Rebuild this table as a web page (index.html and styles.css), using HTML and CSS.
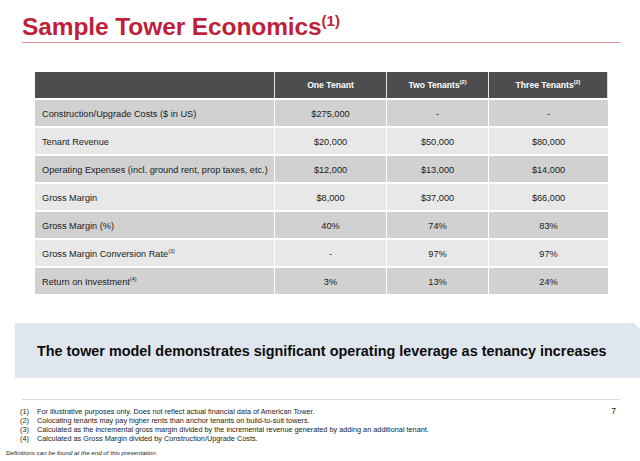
FILE: index.html
```html
<!DOCTYPE html>
<html>
<head>
<meta charset="utf-8">
<link rel="stylesheet" href="styles.css">
</head>
<body>
<div class="slide">
  <header class="head">
    <h1 class="title">Sample Tower Economics<sup>(1)</sup></h1>
  </header>

  <table class="econ">
    <colgroup>
      <col class="c1"><col class="c2"><col class="c3"><col class="c4">
    </colgroup>
    <thead>
      <tr>
        <th></th>
        <th>One Tenant</th>
        <th>Two Tenants<sup>(2)</sup></th>
        <th>Three Tenants<sup>(2)</sup></th>
      </tr>
    </thead>
    <tbody>
      <tr class="dark"><td>Construction/Upgrade Costs ($ in US)</td><td>$275,000</td><td>-</td><td>-</td></tr>
      <tr class="light"><td>Tenant Revenue</td><td>$20,000</td><td>$50,000</td><td>$80,000</td></tr>
      <tr class="dark"><td>Operating Expenses (incl. ground rent, prop taxes, etc.)</td><td>$12,000</td><td>$13,000</td><td>$14,000</td></tr>
      <tr class="light"><td>Gross Margin</td><td>$8,000</td><td>$37,000</td><td>$66,000</td></tr>
      <tr class="dark"><td>Gross Margin (%)</td><td>40%</td><td>74%</td><td>83%</td></tr>
      <tr class="light"><td>Gross Margin Conversion Rate<sup>(3)</sup></td><td>-</td><td>97%</td><td>97%</td></tr>
      <tr class="dark"><td>Return on Investment<sup>(4)</sup></td><td>3%</td><td>13%</td><td>24%</td></tr>
    </tbody>
  </table>

  <div class="banner">The tower model demonstrates significant operating leverage as tenancy increases</div>

  <footer class="foot">
    <div class="notes-row">
      <ol class="notes">
        <li><span class="num">(1)</span>For illustrative purposes only. Does not reflect actual financial data of American Tower.</li>
        <li><span class="num">(2)</span>Colocating tenants may pay higher rents than anchor tenants on build-to-suit towers.</li>
        <li><span class="num">(3)</span>Calculated as the incremental gross margin divided by the incremental revenue generated by adding an additional tenant.</li>
        <li><span class="num">(4)</span>Calculated as Gross Margin divided by Construction/Upgrade Costs.</li>
      </ol>
      <span class="page">7</span>
    </div>
    <p class="defs">Definitions can be found at the end of this presentation.</p>
  </footer>
</div>
</body>
</html>
```

FILE: styles.css
```css
* { box-sizing: border-box; }
html, body { margin: 0; padding: 0; background: #fff; }
body {
  font-family: "Liberation Sans", Arial, sans-serif;
  color: #111;
  width: 640px;
  height: 461px;
  overflow: hidden;
}
.slide { display: flex; flex-direction: column; }

.head {
  margin: 0 20px 0 22px;
  padding-top: 15px;
  height: 43px;
  border-bottom: 1px solid #e48a98;
}
.title {
  margin: 0;
  font-size: 24.5px;
  line-height: 24px;
  font-weight: bold;
  color: #bf1f3b;
  letter-spacing: -0.1px;
}
.title sup {
  font-size: 15px;
  line-height: 0;
  vertical-align: 9px;
  letter-spacing: 0;
}

.econ {
  margin: 29px 0 0 35px;
  width: 573px;
  border-collapse: separate;
  border-spacing: 0;
  table-layout: fixed;
  font-size: 9.2px;
}
.c1 { width: 240px; }
.c2 { width: 112px; }
.c3 { width: 102px; }
.c4 { width: 119px; }

.econ th {
  background: #4d4d4f;
  color: #fff;
  font-weight: bold;
  font-size: 8.6px;
  height: 26px;
  padding: 0;
  text-align: center;
  border-right: 1px solid #e6e6e6;
}
.econ th:last-child { border-right: 1px solid #d9d9d9; }
.econ td {
  height: 28px;
  padding: 2px 0 0 0;
  border-top: 2px solid #fff;
  border-right: 1px solid #fff;
  text-align: center;
  color: #1a1a1a;
}
.econ td:first-child { text-align: left; padding-left: 7px; }
.econ td:last-child { border-right: 0; }
.econ sup { font-size: 5.5px; line-height: 0; vertical-align: 4px; }
.dark td { background: #d1d1d1; }
.light td { background: #e8e8e8; }

.banner {
  margin: 29px 0 0 15px;
  height: 55px;
  background: #dfe6ee;
  display: flex;
  align-items: center;
  padding-left: 22px;
  font-size: 14.4px;
  font-weight: bold;
  color: #0d0d0d;
  clip-path: polygon(0 0, calc(100% - 6px) 0, 100% 6px, 100% 100%, 0 100%);
}

.foot {
  margin: 21px 20px 0 22px;
  border-top: 1px solid #dcdcdc;
  padding-top: 7px;
}
.notes-row { display: flex; justify-content: space-between; }
.notes {
  list-style: none;
  margin: 0 0 0 -2px;
  padding: 0;
  font-size: 7.3px;
  line-height: 9px;
  color: #222;
}
.notes li { display: flex; }
.num { width: 17px; flex: none; }
.page { font-size: 8.5px; color: #222; padding-right: 4px; line-height: 9px; }
.defs {
  margin: 6px 0 0 -16px;
  font-size: 6.2px;
  font-style: italic;
  color: #222;
}
```
